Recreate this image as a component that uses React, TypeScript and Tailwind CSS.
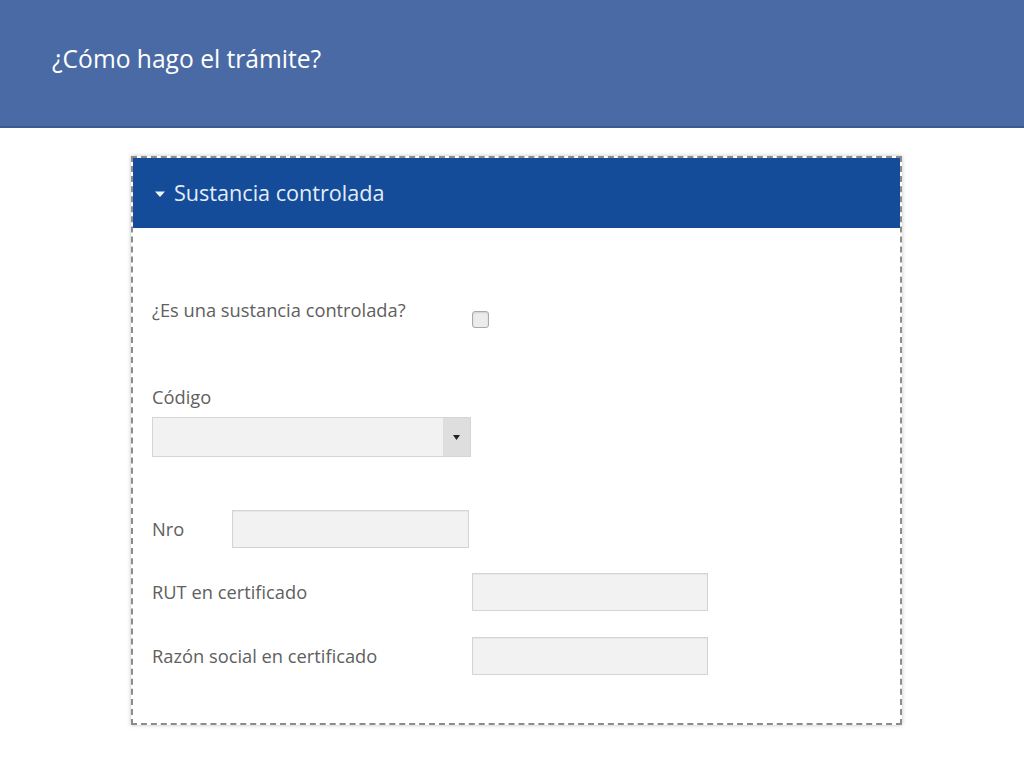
import React from "react";

const Field = ({ className = "" }: { className?: string }) => (
  <div
    className={`h-[38px] border border-[#d4d4d4] bg-[#f2f2f2] shadow-[inset_0_1px_1px_rgba(0,0,0,0.05)] ${className}`}
  />
);

export default function App() {
  return (
    <main className="w-[1024px] h-[768px] bg-white overflow-hidden font-['Open_Sans',sans-serif]">
      {/* Top banner */}
      <div className="h-[128px] bg-[#4a6aa5] border-b-2 border-[#3d5b91] px-[52px] pt-[42px]">
        <h1 className="text-[24.6px] leading-[34px] text-white">¿Cómo hago el trámite?</h1>
      </div>

      {/* Card */}
      <div className="ml-[131px] mt-[28px] w-[771px] h-[569px] border-2 border-dashed border-[#8c8c8c] bg-white shadow-[0_0_4px_rgba(0,0,0,0.25)]">
        <div className="h-[70px] bg-[#154c9a] flex items-center pl-[21px] gap-[8px]">
          <svg width="12" height="8" viewBox="0 0 12 8" className="mt-[1px]">
            <path d="M1 1.5 L11 1.5 L6 7 Z" fill="#eef3fa" />
          </svg>
          <span className="text-[21.6px] text-[#e4ecf7]">Sustancia controlada</span>
        </div>

        <div className="pl-[19px] text-[18.3px] leading-[24px] text-[#606060]">
          {/* Row 1 */}
          <div className="mt-[70px] h-[30px] flex items-start">
            <span className="w-[320px]">¿Es una sustancia controlada?</span>
            <span className="mt-[13px] w-[17px] h-[17px] rounded-[3px] border border-[#a9a9a9] bg-[#ececec] shadow-[inset_0_1px_2px_rgba(0,0,0,0.12)]" />
          </div>

          {/* Row 2 */}
          <div className="mt-[57px]">Código</div>
          <div className="mt-[8px] w-[319px] h-[40px] flex border border-[#d4d4d4] bg-[#f2f2f2]">
            <div className="flex-1" />
            <div className="w-[27px] bg-[#dedede] flex items-center justify-center">
              <svg width="7" height="5" viewBox="0 0 7 5">
                <path d="M0 0 L7 0 L3.5 5 Z" fill="#222" />
              </svg>
            </div>
          </div>

          {/* Row 3 */}
          <div className="mt-[53px] flex items-center">
            <span className="w-[80px]">Nro</span>
            <Field className="w-[237px]" />
          </div>

          {/* Row 4 */}
          <div className="mt-[25px] flex items-center">
            <span className="w-[320px]">RUT en certificado</span>
            <Field className="w-[236px]" />
          </div>

          {/* Row 5 */}
          <div className="mt-[26px] flex items-center">
            <span className="w-[320px]">Razón social en certificado</span>
            <Field className="w-[236px]" />
          </div>
        </div>
      </div>
    </main>
  );
}
